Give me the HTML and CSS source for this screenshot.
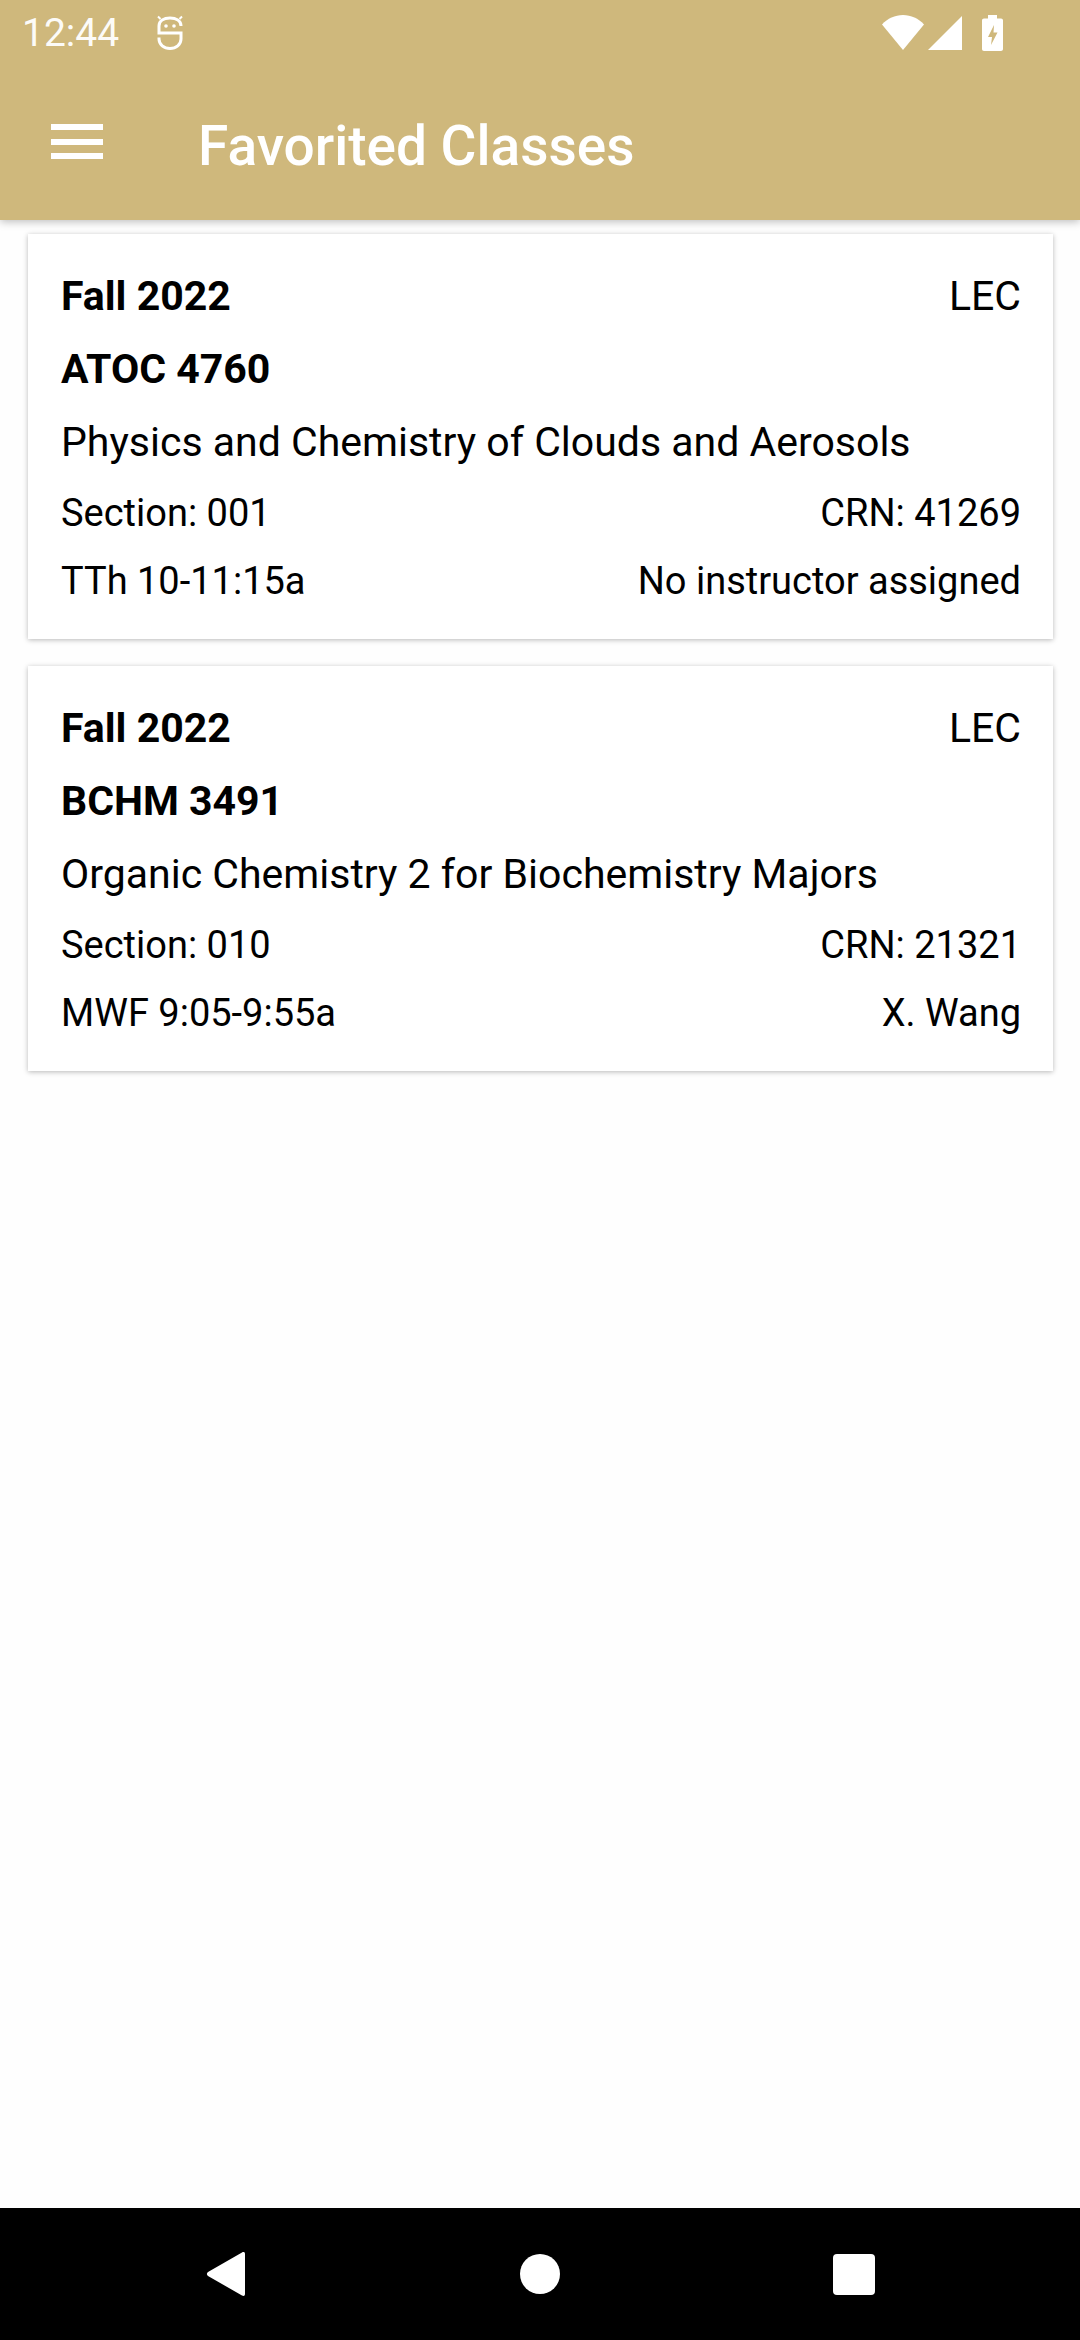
FILE: index.html
```html
<!DOCTYPE html>
<html lang="en">

<head>
  <meta charset="UTF-8">
  <meta name="viewport" content="width=device-width, initial-scale=1.0">
  <title>Favorited Classes</title>
  <link rel="stylesheet" href="styles.css">
</head>

<body>
  <div class="app">
    <header class="top">
      <div class="status-bar">
        <span class="clock">12:44</span>
        <svg class="bot-icon" width="26" height="36" viewBox="0 0 26 36" fill="none" stroke="#fff" stroke-width="3">
          <path d="M24 11C24 5.500 19 3 13 3C7 3 2 5.500 2 11V18H24V24C24 29.500 19 33.500 13 33.500C7 33.500 2 29.500 2 24V22.500"/>
          <path d="M3.500 4L1 1.500M22.500 4L25 1.500" stroke-width="2"/>
          <circle cx="9" cy="11" r="1.800" fill="#fff" stroke="none"/>
          <circle cx="17" cy="11" r="1.800" fill="#fff" stroke="none"/>
        </svg>
        <div class="status-right">
          <svg width="42" height="35" viewBox="0 0 42 35"><path d="M0 9.500C5.500 3.500 13 0 21 0C29 0 36.500 3.500 42 9.500L21 35Z" fill="#fff"/></svg>
          <svg class="signal" width="34" height="34" viewBox="0 0 34 34"><path d="M34 0V34H0Z" fill="#fff"/></svg>
          <svg class="battery" width="21" height="36" viewBox="0 0 21 36">
            <path fill-rule="evenodd" fill="#fff" d="M6 0H15V3.500H19C20.200 3.500 21 4.300 21 5.500V34C21 35.200 20.200 36 19 36H2C.8 36 0 35.200 0 34V5.500C0 4.300 .8 3.500 2 3.500H6ZM12 10L6 22H10L9 30L15.500 17.500H11.500Z"/>
          </svg>
        </div>
      </div>
      <div class="app-bar">
        <button class="menu-btn" aria-label="Menu">
          <span></span>
          <span></span>
          <span></span>
        </button>
        <h1 class="app-title">Favorited Classes</h1>
      </div>
    </header>

    <main class="class-list">
      <article class="class-card">
        <div class="row row-term">
          <strong>Fall 2022</strong>
          <span>LEC</span>
        </div>
        <div class="row row-code"><strong>ATOC 4760</strong></div>
        <div class="row row-name">Physics and Chemistry of Clouds and Aerosols</div>
        <div class="row row-section">
          <span>Section: 001</span>
          <span>CRN: 41269</span>
        </div>
        <div class="row row-time">
          <span>TTh 10-11:15a</span>
          <span>No instructor assigned</span>
        </div>
      </article>

      <article class="class-card">
        <div class="row row-term">
          <strong>Fall 2022</strong>
          <span>LEC</span>
        </div>
        <div class="row row-code"><strong>BCHM 3491</strong></div>
        <div class="row row-name">Organic Chemistry 2 for Biochemistry Majors</div>
        <div class="row row-section">
          <span>Section: 010</span>
          <span>CRN: 21321</span>
        </div>
        <div class="row row-time">
          <span>MWF 9:05-9:55a</span>
          <span>X. Wang</span>
        </div>
      </article>
    </main>

    <nav class="nav-bar">
      <svg width="40" height="46" viewBox="0 0 40 46"><path d="M36 1.500C37.500 .5 39 1 39 3V43C39 45 37.500 45.500 36 44.500L2 25C.5 24 .5 22 2 21Z" fill="#fff"/></svg>
      <span class="nav-home"></span>
      <span class="nav-recent"></span>
    </nav>
  </div>
</body>

</html>
```

FILE: styles.css
```css
* {
  box-sizing: border-box;
}

body {
  margin: 0;
  font-family: Roboto, "Liberation Sans", sans-serif;
  color: #000;
  background: #fff;
}

.app {
  display: flex;
  flex-direction: column;
  height: 2340px;
}

/* top area */
.top {
  height: 220px;
  background: #cfb87c;
  color: #fff;
  box-shadow: 0 2px 8px rgba(0, 0, 0, 0.25);
  position: relative;
  z-index: 1;
}

.status-bar {
  height: 66px;
  padding: 15px 77px 0 22px;
  display: flex;
  align-items: flex-start;
}

.clock {
  font-size: 39px;
  line-height: 38px;
  opacity: 0.95;
  margin-top: -1px;
}

.bot-icon {
  margin: 0 0 0 38px;
}

.status-right {
  margin-left: auto;
  display: flex;
  align-items: flex-start;
}

.signal {
  margin: 1px 0 0 4px;
}

.battery {
  margin-left: 20px;
}

.app-bar {
  height: 154px;
  display: flex;
  align-items: center;
  padding-left: 51px;
}

.menu-btn {
  width: 52px;
  height: 35px;
  padding: 0;
  margin: -3px 0 0;
  border: 0;
  background: none;
  display: flex;
  flex-direction: column;
  justify-content: space-between;
}

.menu-btn span {
  height: 6px;
  background: #fff;
}

.app-title {
  margin: 5px 0 0 95px;
  font-size: 55px;
  line-height: 64px;
  font-weight: 500;
}

/* cards */
.class-list {
  flex: 1;
  padding: 14px 27px 0 28px;
  display: flex;
  flex-direction: column;
  gap: 27px;
  background: #fefefe;
}

.class-card {
  height: 405px;
  padding: 41px 32px 0 33px;
  background: #fff;
  box-shadow: 0 1px 5px rgba(0, 0, 0, 0.28);
}

.row {
  display: flex;
  justify-content: space-between;
  font-size: 41px;
  line-height: 43px;
}

.row strong {
  font-weight: 700;
}

.row-code,
.row-name {
  margin-top: 30px;
}

.row-section {
  margin-top: 28px;
}

.row-section,
.row-time {
  font-size: 38px;
}

.row-time {
  margin-top: 25px;
}

/* bottom nav */
.nav-bar {
  height: 132px;
  background: #000;
  display: flex;
  align-items: center;
  padding: 0 205px 0 206px;
  justify-content: space-between;
}

.nav-home {
  width: 40px;
  height: 40px;
  border-radius: 50%;
  background: #fff;
}

.nav-recent {
  width: 42px;
  height: 41px;
  border-radius: 4px;
  background: #fff;
}
```
